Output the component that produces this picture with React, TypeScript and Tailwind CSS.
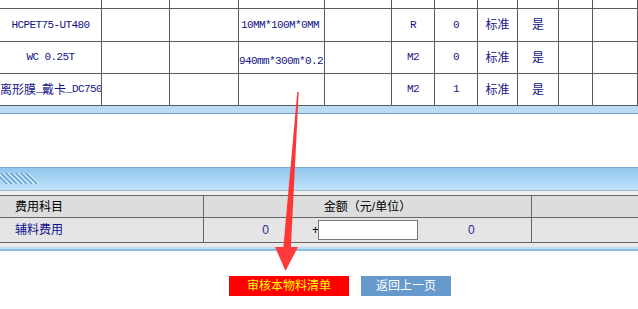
import React from "react";

const mono = { fontFamily: '"Liberation Mono", "Noto Sans CJK SC", monospace' };
const cjk = { fontFamily: '"Liberation Sans", "Noto Sans CJK SC", sans-serif' };

const cols = "grid grid-cols-[102px_68px_69px_86px_67px_43px_43px_40px_41px_34px_1fr]";

function Cell({ children, className = "" }: { children?: React.ReactNode; className?: string }) {
  return (
    <div className={`border-r border-b border-[#5a5a5a] overflow-hidden whitespace-nowrap flex items-center text-[#141488] ${className}`}>
      {children}
    </div>
  );
}

function M({ children }: { children: React.ReactNode }) {
  return <span className="text-[11px] tracking-[-0.6px]" style={mono}>{children}</span>;
}
function C({ children }: { children: React.ReactNode }) {
  return <span className="text-[12px]" style={cjk}>{children}</span>;
}

function Row({ h, cells }: { h: string; cells: React.ReactNode[] }) {
  return (
    <div className={`${cols} ${h}`}>
      {cells.map((c, i) => (
        <Cell key={i} className={i === 3 ? "justify-start pl-[2px]" : "justify-center"}>
          {c}
        </Cell>
      ))}
    </div>
  );
}

export default function App() {
  const empty = Array.from({ length: 11 }, () => null);
  return (
    <div className="relative w-[638px] h-[309px] bg-white overflow-hidden">
      {/* top table */}
      <Row h="h-[9px]" cells={empty} />
      <Row
        h="h-[33px]"
        cells={[
          <M>HCPET75-UT480</M>, null, null, <M>10MM*100M*0MM</M>, null,
          <M>R</M>, <M>0</M>, <C>标准</C>, <C>是</C>, null, null,
        ]}
      />
      <Row
        h="h-[32px]"
        cells={[
          <M>WC 0.25T</M>, null, null, <span className="-ml-[2px]"><M>940mm*300m*0.2</M></span>, null,
          <M>M2</M>, <M>0</M>, <C>标准</C>, <C>是</C>, null, null,
        ]}
      />
      <div className={`${cols} h-[32px]`}>
        <Cell className="justify-start">
          <C>离形膜</C><M>_</M><C>戴卡</C><M>_DC750</M>
        </Cell>
        <Cell />
        <Cell />
        <Cell />
        <Cell />
        <Cell className="justify-center"><M>M2</M></Cell>
        <Cell className="justify-center"><M>1</M></Cell>
        <Cell className="justify-center"><C>标准</C></Cell>
        <Cell className="justify-center"><C>是</C></Cell>
        <Cell />
        <Cell />
      </div>

      {/* blue band under top table */}
      <div className="h-[7px] bg-[#badcf4]" />
      <div className="h-[1px] bg-[#6f9fc5]" />

      <div className="h-[53px] bg-white" />

      {/* header band */}
      <div className="h-[1px] bg-[#7eaad0]" />
      <div className="relative h-[22px] bg-gradient-to-b from-[#92c6ee] to-[#c0e3fa]">
        <svg className="absolute left-0 top-0" width="40" height="22" viewBox="0 0 40 22">
          {[-4, 1, 6, 11, 16, 21, 26].map((x) => (
            <g key={x}>
              <line x1={x} y1={5} x2={x + 11} y2={16} stroke="#6aa3cf" strokeWidth="1.4" />
              <line x1={x + 2} y1={5} x2={x + 13} y2={16} stroke="#e3f3ff" strokeWidth="1" />
            </g>
          ))}
        </svg>
      </div>
      <div className="h-[1px] bg-[#a7b7c3]" />
      <div className="h-[4px] bg-[#eeeeee]" />

      {/* bottom table */}
      <div className="border-t border-[#666666] text-[12px]" style={cjk}>
        <div className="grid grid-cols-[204px_328px_1fr] h-[22px] bg-[#dddddd]">
          <div className="border-r border-b border-[#666666] flex items-center pl-[15px] text-black">费用科目</div>
          <div className="border-r border-b border-[#666666] flex items-center justify-center text-black">金额（元/单位）</div>
          <div className="border-b border-[#666666]" />
        </div>
        <div className="grid grid-cols-[204px_328px_1fr] h-[25px] bg-[#e5e5e5]">
          <div className="border-r border-b border-[#666666] flex items-center pl-[15px] text-[#10108f]">辅料费用</div>
          <div className="border-r border-b border-[#666666] flex items-center">
            <div className="w-[65px] text-right text-[#2a2a90]">0</div>
            <div className="ml-[43px] w-[6px] text-black">+</div>
            <div className="w-[100px] h-[20px] bg-white border border-[#777777]" />
            <div className="ml-[50px] text-[#2a2a90]">0</div>
          </div>
          <div className="border-b border-[#666666]" />
        </div>
      </div>
      <div className="h-[4px] bg-[#e9e9e9]" />
      <div className="h-[2px] bg-[#bcdcf3]" />
      <div className="h-[2px] bg-[#8dbde0]" />

      {/* buttons */}
      <div className="flex pt-[25px] pl-[229px] gap-[12px] text-[12px]" style={cjk}>
        <div className="w-[120px] h-[20px] bg-[#ff0000] text-[#ffff00] flex items-center justify-center">审核本物料清单</div>
        <div className="w-[90px] h-[20px] bg-[#6699cc] text-white flex items-center justify-center">返回上一页</div>
      </div>

      {/* red arrow overlay */}
      <svg className="absolute left-0 top-0 pointer-events-none" width="638" height="309" viewBox="0 0 638 309">
        <polygon points="297.3,92 298.7,92 290.8,249 283.2,249" fill="#ff3636" />
        <polygon points="275,247 298,247 285.5,271" fill="#ff3a3a" />
      </svg>
    </div>
  );
}
